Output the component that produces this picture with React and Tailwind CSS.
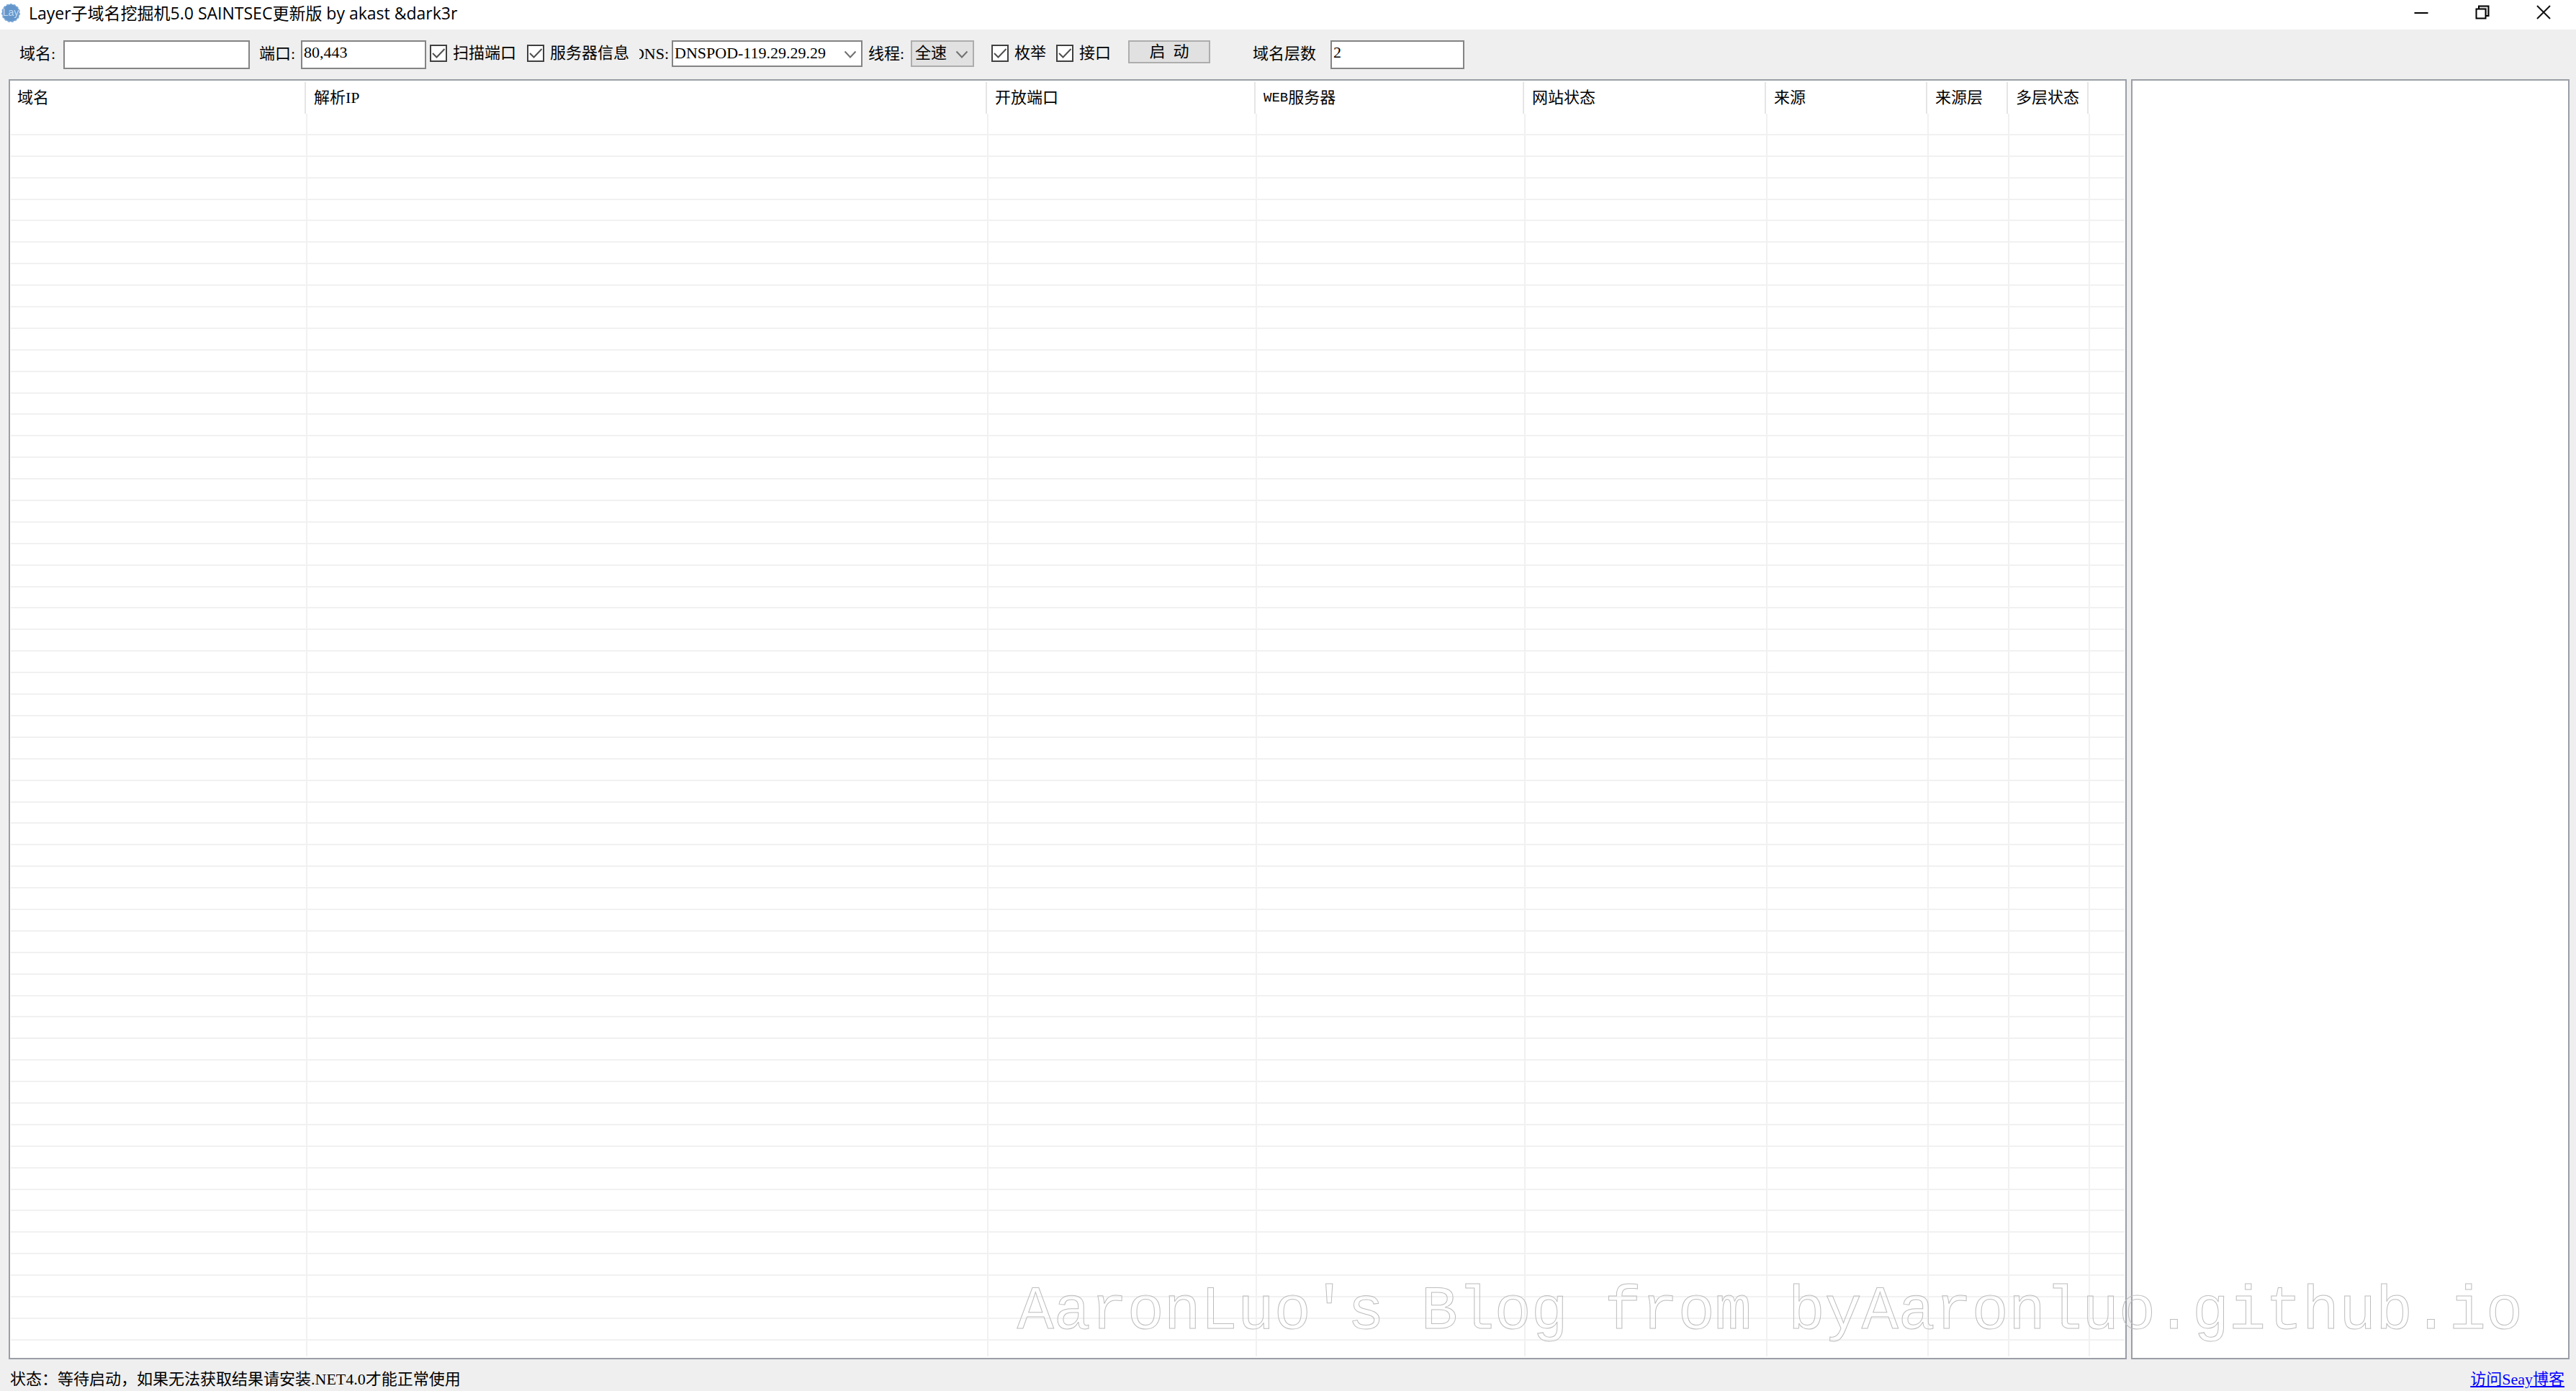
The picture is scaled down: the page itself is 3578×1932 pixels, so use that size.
import React from "react";
import clsx from "clsx";

const columns = [
  { label: "域名", width: "w-[412px]" },
  { label: "解析IP", width: "w-[946px]" },
  { label: "开放端口", width: "w-[373px]" },
  { label: "WEB服务器", width: "w-[373px]", mono: "WEB", rest: "服务器" },
  { label: "网站状态", width: "w-[336px]" },
  { label: "来源", width: "w-[224px]" },
  { label: "来源层", width: "w-[112px]" },
  { label: "多层状态", width: "w-[112px]" },
];

const rows = Array.from({ length: 57 }, (_, i) => i);

function AppIcon() {
  return (
    <svg viewBox="0 0 26 26" className="h-[26px] w-[26px]" aria-hidden="true">
      <circle cx="13" cy="13" r="12" fill="#6496cb" />
      <circle cx="13" cy="13" r="12" fill="none" stroke="#7ba9d8" strokeWidth="2" strokeDasharray="3 2" />
      <text
        x="13"
        y="17"
        textAnchor="middle"
        fontFamily="Liberation Sans, sans-serif"
        fontSize="14"
        fill="#c3daf0"
      >
        Lay
      </text>
    </svg>
  );
}

function TitleBar() {
  return (
    <header className="flex h-[41px] shrink-0 items-start bg-white">
      <div className="flex h-9 flex-1 items-center gap-3 pl-[2px]">
        <AppIcon />
        <h1 className="font-['Open_Sans','Noto_Sans_CJK_SC',sans-serif] text-[23px] leading-9 whitespace-nowrap text-black">
          Layer子域名挖掘机5.0 SAINTSEC更新版 by akast &amp;dark3r
        </h1>
      </div>
      <div className="flex pr-[3px]">
        <button type="button" aria-label="最小化" className="flex h-[34px] w-[85px] items-center justify-center">
          <svg viewBox="0 0 20 20" className="h-5 w-5" fill="none" stroke="#000" strokeWidth="2">
            <path d="M0.5 11H19.5" />
          </svg>
        </button>
        <button type="button" aria-label="还原" className="flex h-[34px] w-[85px] items-center justify-center">
          <svg viewBox="0 0 20 20" className="h-5 w-5" fill="none" stroke="#000" strokeWidth="2">
            <path d="M5 5V1.5H18.5V15H15" fill="#ddd" />
            <path d="M1.5 5.5H14.5V18.5H1.5Z" fill="#fff" />
          </svg>
        </button>
        <button type="button" aria-label="关闭" className="flex h-[34px] w-[85px] items-center justify-center">
          <svg viewBox="0 0 20 20" className="h-5 w-5" fill="none" stroke="#111" strokeWidth="2">
            <path d="M1 1L19 19M19 1L1 19" />
          </svg>
        </button>
      </div>
    </header>
  );
}

function Label({ htmlFor, className, children }) {
  return (
    <label htmlFor={htmlFor} className={clsx("flex h-[37px] shrink-0 items-center whitespace-nowrap", className)}>
      {children}
    </label>
  );
}

function TextBox({ id, className, defaultValue }) {
  return (
    <input
      id={id}
      type="text"
      defaultValue={defaultValue}
      className={clsx(
        "h-10 shrink-0 border-2 border-[#848484] bg-white px-[2px] pb-[6px] outline-none",
        className
      )}
    />
  );
}

function Check({ id, className, children }) {
  return (
    <label
      htmlFor={id}
      className={clsx("flex h-[35px] shrink-0 items-center gap-2 whitespace-nowrap", className)}
    >
      <span className="grid h-6 w-6">
        <input
          id={id}
          type="checkbox"
          defaultChecked
          className="peer col-start-1 row-start-1 h-6 w-6 appearance-none border-2 border-[#404040] bg-white"
        />
        <svg
          viewBox="0 0 24 24"
          className="pointer-events-none invisible col-start-1 row-start-1 h-6 w-6 peer-checked:visible"
          fill="none"
          stroke="#505050"
          strokeWidth="2"
        >
          <path d="M4 12L9.500 17.500L20.500 6" />
        </svg>
      </span>
      {children}
    </label>
  );
}

function Combo({ id, value, className, selectClass }) {
  return (
    <div className={clsx("relative h-[37px] shrink-0", className)}>
      <select
        id={id}
        defaultValue={value}
        className={clsx("h-full w-full appearance-none border-2 pr-8 pb-[2px] outline-none", selectClass)}
      >
        <option value={value}>{value}</option>
      </select>
      <svg
        viewBox="0 0 18 12"
        className="pointer-events-none absolute top-[14px] right-2 h-3 w-[18px]"
        fill="none"
        stroke="#707070"
        strokeWidth="2"
      >
        <path d="M1.500 1.500L9 9.500L16.500 1.500" />
      </svg>
    </div>
  );
}

function Toolbar() {
  return (
    <form
      className="flex h-[69px] shrink-0 items-start pt-[15px] pl-[27px]"
      onSubmit={(e) => e.preventDefault()}
    >
      <Label htmlFor="domain" className="w-[61px]">域名:</Label>
      <TextBox id="domain" className="w-[259px]" />
      <Label htmlFor="ports" className="ml-[13px] w-[58px]">端口:</Label>
      <TextBox id="ports" className="w-[174px]" defaultValue="80,443" />
      <Check id="scan" className="ml-[5px] w-[130px]">扫描端口</Check>
      <Check id="server" className="ml-[5px] w-[152px]">服务器信息</Check>
      <Label htmlFor="dns" className="ml-1 w-[41px] justify-end overflow-hidden">
        DNS:
      </Label>
      <Combo
        id="dns"
        value="DNSPOD-119.29.29.29"
        className="ml-[4px] w-[265px]"
        selectClass="border-[#848484] bg-white pl-[2px]"
      />
      <Label htmlFor="threads" className="ml-2 w-[59px]">线程:</Label>
      <Combo
        id="threads"
        value="全速"
        className="w-[88px]"
        selectClass="border-[#adadad] bg-[#e1e1e1] pl-[4px]"
      />
      <Check id="enum" className="ml-6 w-[80px]">枚举</Check>
      <Check id="api" className="ml-[10px] w-[80px]">接口</Check>
      <button
        type="submit"
        className="ml-[20px] flex h-8 w-[114px] items-center justify-center gap-[11px] border-2 border-[#adadad] bg-[#e1e1e1]"
      >
        <span>启</span>
        <span>动</span>
      </button>
      <Label htmlFor="depth" className="ml-[59px] w-[108px]">域名层数</Label>
      <TextBox id="depth" className="w-[186px]" defaultValue="2" />
    </form>
  );
}

function ResultTable() {
  return (
    <section className="min-w-0 flex-1 border-2 border-[#9a9ea6] bg-white px-px py-[2px]">
      <table className="h-full w-full table-fixed border-separate border-spacing-0">
        <colgroup>
          {columns.map((c) => (
            <col key={c.label} className={c.width} />
          ))}
          <col />
        </colgroup>
        <thead>
          <tr className="h-11">
            {columns.map((c) => (
              <th key={c.label} scope="col" className="p-0 text-left font-normal">
                <div className="mr-[2px] flex h-11 items-center border-r-2 border-[#e5e5e5] pl-[9px] whitespace-nowrap">
                  {c.mono ? (
                    <>
                      <span className="font-['Liberation_Mono',monospace] text-[19px]">{c.mono}</span>
                      {c.rest}
                    </>
                  ) : (
                    c.label
                  )}
                </div>
              </th>
            ))}
            <td className="p-0" />
          </tr>
        </thead>
        <tbody>
          {rows.map((r) => (
            <tr key={r}>
              {columns.map((c) => (
                <td key={c.label} className="border-r-2 border-b-2 border-[#f1f1f1] p-0" />
              ))}
              <td className="border-b-2 border-[#f1f1f1] p-0" />
            </tr>
          ))}
        </tbody>
        <tfoot>
          <tr className="h-[22px]">
            {columns.map((c) => (
              <td key={c.label} className="h-[22px] border-r-2 border-[#f1f1f1] p-0" />
            ))}
            <td className="p-0" />
          </tr>
        </tfoot>
      </table>
    </section>
  );
}

export default function App() {
  return (
    <div
      lang="zh-CN"
      className="relative flex h-screen flex-col bg-[#efefef] font-['Liberation_Serif','Noto_Sans_CJK_SC',serif] text-[22px] leading-8 text-black"
    >
      <TitleBar />
      <Toolbar />
      <main className="flex min-h-0 flex-1 gap-[6px] pr-[9px] pl-[12px]">
        <ResultTable />
        <aside className="w-[609px] shrink-0 border-2 border-[#9a9ea6] bg-white" />
      </main>
      <footer className="flex h-11 shrink-0 items-center justify-between pt-3 pr-4 pl-[14px]">
        <p>状态：等待启动，如果无法获取结果请安装.NET4.0才能正常使用</p>
        <a href="#blog" className="text-[#0000ff] underline">
          访问Seay博客
        </a>
      </footer>
      <p className="pointer-events-none absolute right-[74px] bottom-[61px] font-['Liberation_Mono',monospace] text-[85px] leading-[96px] whitespace-nowrap text-transparent [-webkit-text-stroke:1px_#bdbdbd]">
        AaronLuo's Blog from byAaronluo.github.io
      </p>
    </div>
  );
}
